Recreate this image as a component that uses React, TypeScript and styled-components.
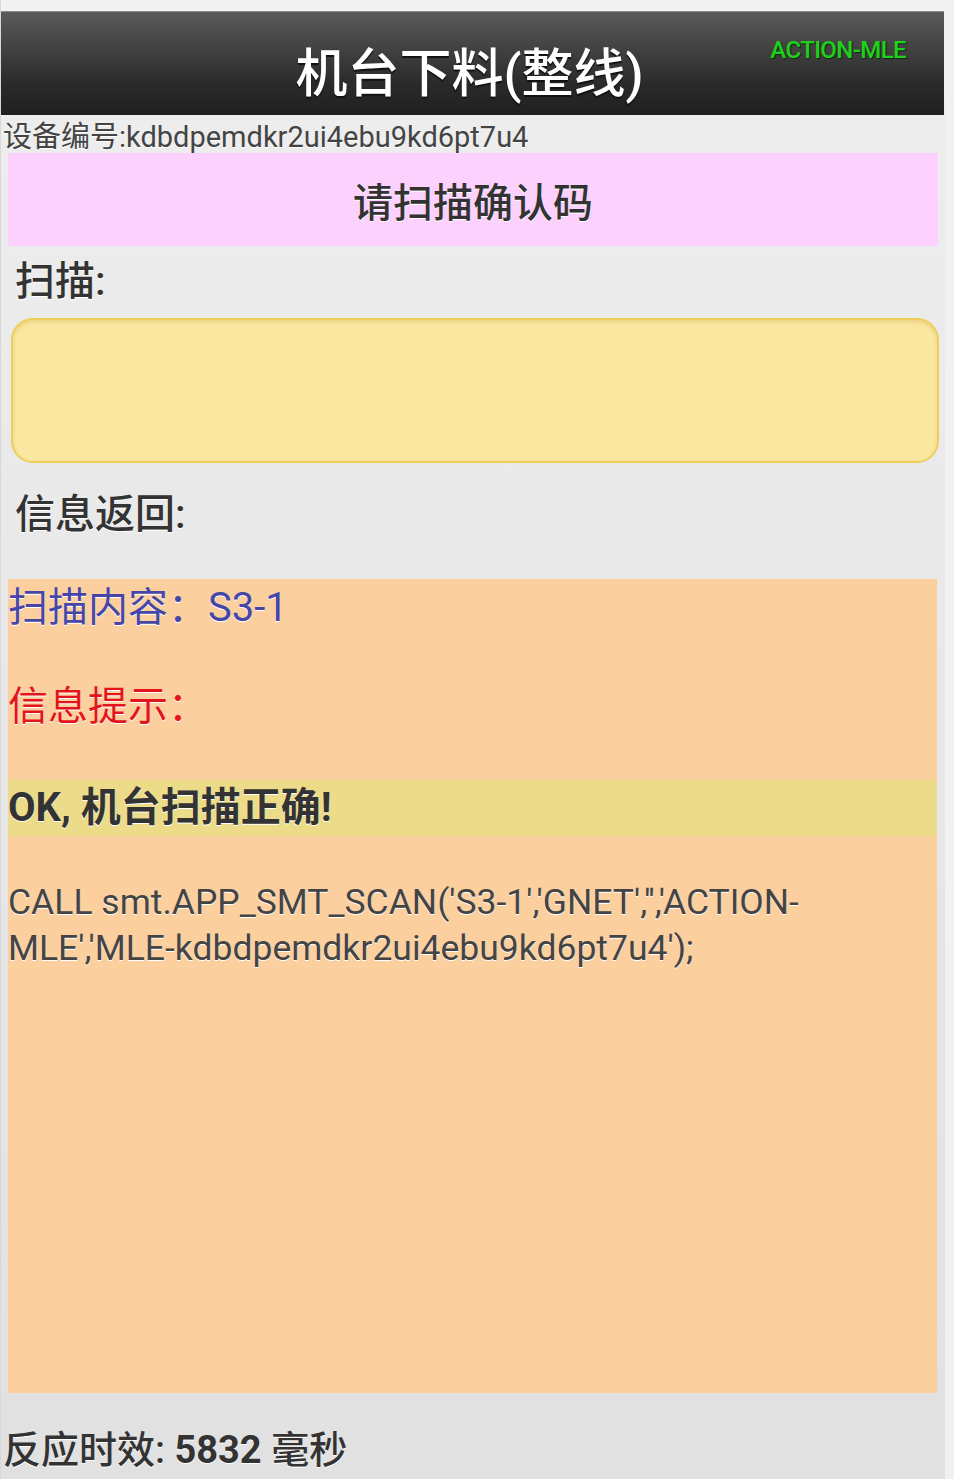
import React from 'react';
import styled, { createGlobalStyle } from 'styled-components';

const GlobalStyle = createGlobalStyle`
  html, body {
    margin: 0;
    padding: 0;
    background: #f1f1f1;
  }
  body {
    font-family: Roboto, "Noto Sans CJK SC", sans-serif;
    color: #333;
  }
`;

const Page = styled.div`
  width: 945px;
  min-height: 1479px;
  padding-top: 11px;
  box-sizing: border-box;
  background: linear-gradient(#f1f1f1 0px, #f1f1f1 11px, #ededed 120px, #e1e1e1 100%);
  border-left: 1px solid #d8d8d8;
  display: flex;
  flex-direction: column;
`;

const Header = styled.header`
  height: 104px;
  width: 943px;
  box-sizing: border-box;
  border-top: 1px solid #8a8a8a;
  background: linear-gradient(#5a5a5a, #2a2a2a 70%, #202020);
  display: flex;
  align-items: center;
  justify-content: center;
  position: relative;
`;

const Title = styled.h1`
  margin: 0;
  margin-left: -6px;
  margin-top: 12px;
  font-size: 52px;
  font-weight: 500;
  color: #fff;
  text-shadow: 0 2px 1px #111;
`;

const Brand = styled.span`
  position: absolute;
  right: 38px;
  top: 24px;
  font-size: 24px;
  letter-spacing: -0.6px;
  font-weight: 500;
  color: #1fd01f;
  text-shadow: 1px 1px 1px #0a2a0a;
`;

const DeviceRow = styled.div`
  height: 38px;
  line-height: 44px;
  font-size: 29px;
  color: #444;
  padding-left: 2px;
  white-space: nowrap;
  overflow: hidden;
  text-shadow: 0 1px 0 #fff;
`;

const Banner = styled.div`
  margin: 0 7px;
  height: 93px;
  background: #fdd1fd;
  display: flex;
  align-items: center;
  justify-content: center;
  font-size: 40px;
  font-weight: 500;
  color: #333;
  text-shadow: 0 1px 0 #fff;
`;

const Label = styled.div<{ $top?: number; $bottom?: number }>`
  margin: ${(p) => p.$top ?? 0}px 0 ${(p) => p.$bottom ?? 0}px 14px;
  height: 58px;
  line-height: 58px;
  font-size: 40px;
  font-weight: 500;
  color: #333;
  text-shadow: 0 1px 0 #fff;
`;

const ScanInput = styled.input`
  display: block;
  margin: 0 6px 0 10px;
  height: 145px;
  box-sizing: border-box;
  border: 2px solid #efcd58;
  border-radius: 22px;
  background: #fbe8a0;
  box-shadow: inset 0 2px 4px rgba(180, 140, 40, 0.25);
  outline: none;
  font-size: 36px;
  padding: 0 20px;
`;

const Result = styled.div`
  margin: 0 8px 0 7px;
  height: 814px;
  background: #fccf9f;
  display: flex;
  flex-direction: column;
`;

const Line = styled.div<{ $color: string; $top?: number }>`
  margin-top: ${(p) => p.$top ?? 0}px;
  height: 58px;
  line-height: 58px;
  font-size: 40px;
  color: ${(p) => p.$color};
  text-shadow: 0 1px 0 #fff;
`;

const OkBand = styled.div`
  margin-top: 44px;
  height: 56px;
  line-height: 56px;
  background: #ecdc89;
  font-size: 40px;
  font-weight: 700;
  color: #333;
  text-shadow: 0 1px 0 #fff;
`;

const Sql = styled.div`
  margin-top: 43px;
  font-size: 35.5px;
  line-height: 46px;
  color: #444;
  text-shadow: 0 1px 0 #fff;
  padding-right: 100px;
  word-break: break-word;
`;

const Footer = styled.div`
  margin-top: 35px;
  padding-left: 2px;
  font-size: 38px;
  line-height: 44px;
  font-weight: 500;
  color: #333;
  text-shadow: 0 1px 0 #fff;

  b {
    font-weight: 700;
  }
`;

const App = () => {
  return (
    <>
      <GlobalStyle />
      <Page>
        <Header>
          <Title>机台下料(整线)</Title>
          <Brand>ACTION-MLE</Brand>
        </Header>
        <DeviceRow>设备编号:kdbdpemdkr2ui4ebu9kd6pt7u4</DeviceRow>
        <Banner>请扫描确认码</Banner>
        <Label $top={7} $bottom={7}>扫描:</Label>
        <ScanInput type="text" />
        <Label $top={23} $bottom={35}>信息返回:</Label>
        <Result>
          <Line $color="#4646a8">扫描内容：S3-1</Line>
          <Line $color="#e3151b" $top={41}>信息提示：</Line>
          <OkBand>OK, 机台扫描正确!</OkBand>
          <Sql>
            CALL smt.APP_SMT_SCAN('S3-1','GNET','','ACTION-MLE','MLE-kdbdpemdkr2ui4ebu9kd6pt7u4');
          </Sql>
        </Result>
        <Footer>
          反应时效: <b>5832</b> 毫秒
        </Footer>
      </Page>
    </>
  );
};

export default App;
